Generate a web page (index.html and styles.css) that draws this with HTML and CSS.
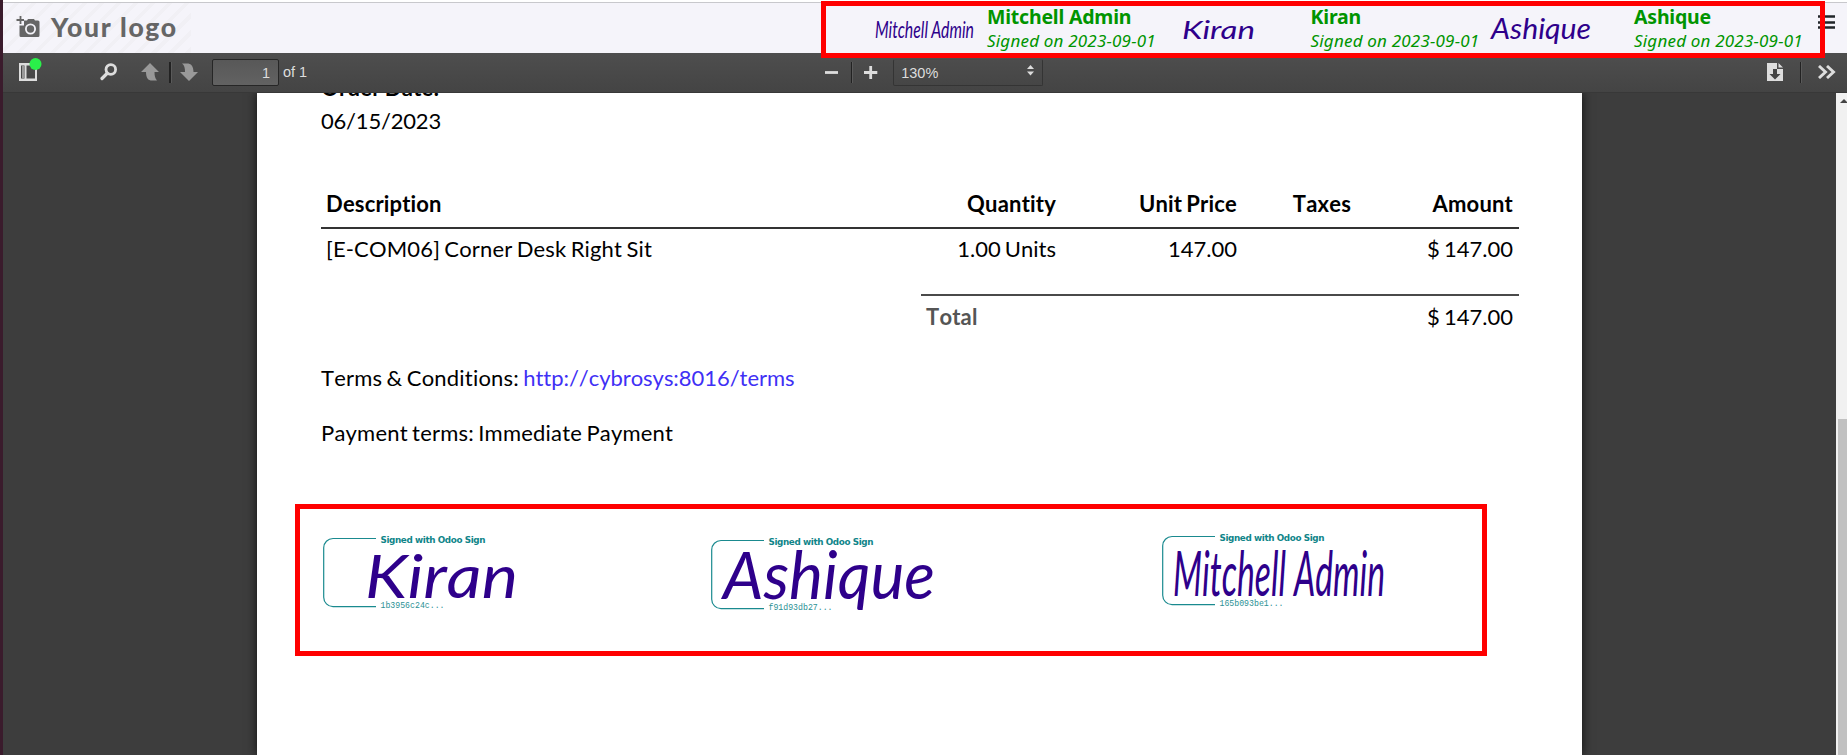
FILE: index.html
```html
<!DOCTYPE html>
<html lang="en">
<head>
<meta charset="utf-8">
<title>Sign document</title>
<link rel="stylesheet" href="styles.css">
</head>
<body>
<div class="app">
  <header class="header">
    <div class="logo">
      <svg width="25" height="23" viewBox="0 0 25 23"><path fill="#666" fill-rule="evenodd" d="M8 4.500h3l1-1.500h6l1 1.500h3a1.500 1.500 0 0 1 1.500 1.500v13.500a1.500 1.500 0 0 1-1.500 1.500h-17a1.500 1.500 0 0 1-1.500-1.500v-10h4.500zM14.500 7.500a5.500 5.500 0 1 0 0 11 5.500 5.500 0 0 0 0-11z"/><circle cx="14.500" cy="13" r="3.700" fill="#666"/><path d="M4.500 0v8M.5 4h7.500" stroke="#666" stroke-width="1.800"/></svg>
      <span>Your logo</span>
    </div>
    <div class="signers">
      <div class="signer">
        <svg class="mini" width="113" height="50"><text class="ink" x="1" y="38" font-size="24" textLength="99" lengthAdjust="spacingAndGlyphs">Mitchell Admin</text></svg>
        <div><div class="name">Mitchell Admin</div><div class="date">Signed on 2023-09-01</div></div>
      </div>
      <div class="signer">
        <svg class="mini" width="113" height="50"><text class="ink" x="-16" y="39" font-size="26" textLength="73" lengthAdjust="spacingAndGlyphs">Kiran</text></svg>
        <div><div class="name">Kiran</div><div class="date">Signed on 2023-09-01</div></div>
      </div>
      <div class="signer">
        <svg class="mini" width="113" height="50"><text class="ink" x="-30" y="39" font-size="28" textLength="100" lengthAdjust="spacingAndGlyphs">Ashique</text></svg>
        <div><div class="name">Ashique</div><div class="date">Signed on 2023-09-01</div></div>
      </div>
    </div>
    <svg class="menu" width="18" height="15"><path d="M0 1.500h17M0 7.500h17M0 12.500h17" stroke="#212529" stroke-width="2.600"/></svg>
  </header>
  <div class="mark mark-top"></div>

  <div class="toolbar">
    <div class="group">
      <svg class="i-side" width="25" height="24"><path fill="#ddd" fill-rule="evenodd" d="M1 5h18v18H1zM3 7.500v13h3.500v-13zM8.500 7.500v13H17v-13z"/><path fill="#999" d="M4 8h2.500v12H4z"/><circle cx="17.500" cy="6" r="6" fill="#2af04a"/></svg>
      <svg class="i-find" width="18" height="18"><circle cx="10.800" cy="6.500" r="4.800" fill="none" stroke="#ddd" stroke-width="2.800"/><path d="M7 10.500L2 15.500" stroke="#ddd" stroke-width="3.200" stroke-linecap="round"/></svg>
      <svg class="i-up" width="18" height="18"><path fill="#999" d="M9 0l9 9h-4.500c0 4 .5 6 2.500 8.500H11C7 17.500 5 15 5 9H0z"/></svg>
      <i class="sep dark"></i>
      <svg class="i-down" width="18" height="18"><path fill="#999" d="M9 18l9-9h-4.500C13.500 3 11 .5 7 .5H2C4.500 2.500 5 5 5 9H0z"/></svg>
      <div class="page-no">1</div>
      <span class="of">of 1</span>
    </div>
    <div class="group zoom">
      <svg width="14" height="14"><path d="M0 7.500h13" stroke="#ddd" stroke-width="2.800"/></svg>
      <i class="sep"></i>
      <svg width="14" height="14"><path d="M0 7.500h13.300M6.700 1v13" stroke="#ddd" stroke-width="2.800"/></svg>
      <div class="select"><span>130%</span><svg width="7" height="11"><path fill="#ddd" d="M3.500 0L7 4H0zM3.500 10.500L0 6.500h7z"/></svg></div>
    </div>
    <div class="group tools">
      <svg width="16" height="18"><path fill="#ddd" d="M0 0h10v6h6v12H0zM11.500 0L16 4.500h-4.500z"/><path fill="#444" d="M6 6h4v5h3.500L8 16.500 2.500 11H6z"/></svg>
      <i class="sep"></i>
      <svg width="18" height="14"><path d="M1 1l6.500 6L1 13M9 1l6.500 6L9 13" fill="none" stroke="#ddd" stroke-width="2.900"/></svg>
    </div>
  </div>

  <main class="viewer">
    <article class="sheet">
      <div class="order"><b>Order Date:</b><span class="order-date">06/15/2023</span></div>
      <div class="row head"><span>Description</span><span>Quantity</span><span>Unit Price</span><span>Taxes</span><span>Amount</span></div>
      <div class="row item"><span>[E-COM06] Corner Desk Right Sit</span><span>1.00 Units</span><span>147.00</span><span></span><span>$ 147.00</span></div>
      <div class="total"><b>Total</b><span>$ 147.00</span></div>
      <p class="terms">Terms &amp; Conditions: <a>http://cybrosys:8016/terms</a></p>
      <p class="terms">Payment terms: Immediate Payment</p>
      <div class="signatures">
        <svg class="sig s1" width="250" height="100"><path class="frame" d="M53 8.500H10a9.300 9.300 0 0 0-9.300 9.300v49.500a9.300 9.300 0 0 0 9.300 9.300h43"/><text class="by" x="57.500" y="12.700" textLength="105">Signed with Odoo Sign</text><text class="hash" x="57.500" y="77.700" textLength="64">1b3956c24c...</text><text class="ink" x="42" y="68" font-size="61" textLength="153" lengthAdjust="spacingAndGlyphs">Kiran</text></svg>
        <svg class="sig s2" width="250" height="100"><path class="frame" d="M53 8.500H10a9.300 9.300 0 0 0-9.300 9.300v49.500a9.300 9.300 0 0 0 9.300 9.300h43"/><text class="by" x="57.500" y="12.700" textLength="105">Signed with Odoo Sign</text><text class="hash" x="57.500" y="77.700" textLength="64">f91d93db27...</text><text class="ink" x="12" y="67" font-size="66" textLength="212" lengthAdjust="spacingAndGlyphs">Ashique</text></svg>
        <svg class="sig s3" width="250" height="100"><path class="frame" d="M53 8.500H10a9.300 9.300 0 0 0-9.300 9.300v49.500a9.300 9.300 0 0 0 9.300 9.300h43"/><text class="by" x="57.500" y="12.700" textLength="105">Signed with Odoo Sign</text><text class="hash" x="57.500" y="77.700" textLength="64">165b093be1...</text><text class="ink" x="11" y="68" font-size="62" textLength="212" lengthAdjust="spacingAndGlyphs">Mitchell Admin</text></svg>
      </div>
      <div class="mark mark-doc"></div>
    </article>
    <div class="scroll"><svg width="11" height="16"><path fill="#444" d="M4 10h8L8 6z"/></svg><div class="thumb"></div></div>
  </main>
</div>
</body>
</html>
```
FILE: styles.css
```css
* { box-sizing: border-box; }
body { margin: 0; overflow: hidden; }
svg { display: block; flex: none; }
.app {
  position: relative;
  display: flex;
  flex-direction: column;
  width: 1847px;
  height: 755px;
  padding-top: 2px;
  border-left: 3px solid #3a1b2c;
  background: #fff;
  overflow: hidden;
}
.header {
  display: flex;
  flex: none;
  height: 51px;
  border-top: 1px solid #c8c8cc;
  background: #f5f4fa;
}
.logo {
  display: flex;
  flex: none;
  width: 188px;
  padding: 13px 0 0 13px;
  background: repeating-linear-gradient(135deg, #f5f4fa 0 8px, #f1f0f5 8px 12px);
}
.logo span {
  margin-left: 10px;
  color: #666;
  font: 900 26.500px/30px Lato, sans-serif;
  letter-spacing: 1.700px;
  white-space: nowrap;
  margin-top: -4px;
}
.signers { display: flex; flex: none; margin-left: 683px; }
.signer { display: flex; width: 323.500px; flex: none; }
.mini { overflow: visible; margin-top: -3px; }
.name {
  height: 25px;
  color: #009400;
  font: 700 19.500px/27px "Noto Sans", sans-serif;
  letter-spacing: -.2px;
  white-space: nowrap;
}
.date {
  color: #009400;
  font: italic 17px/26px "Noto Sans", sans-serif;
  letter-spacing: .2px;
  white-space: nowrap;
}
.menu { margin: 12px 0 0 -27px; }
.ink { fill: #2e008b; font-family: Lato, sans-serif; font-style: italic; }
.mark { position: absolute; border: 5px solid #f00; }
.mark-top { left: 818px; top: 1px; width: 1004px; height: 57px; z-index: 2; }
.toolbar {
  display: flex;
  flex: none;
  height: 40px;
  padding-bottom: 1px;
  background: linear-gradient(#4e4e4e, #444);
  border-bottom: 1px solid #383838;
  color: #ddd;
  font: 14.500px/20px "Liberation Sans", Arial, sans-serif;
}
.group { display: flex; align-items: center; }
.i-side { margin: -4px 0 0 15px; }
.i-find { margin-left: 57px; }
.i-up { margin: 0 0 0 23px; }
.i-down { margin-left: 9px; }
.sep { flex: none; width: 1px; height: 21px; background: #222; box-shadow: 1px 0 #5a5a5a; }
.sep.dark { width: 2px; margin-left: 10px; }
.page-no {
  width: 67px;
  height: 27px;
  margin-left: 14px;
  padding: 3px 8px;
  border: 1px solid #262626;
  border-radius: 2px;
  background: linear-gradient(#585858, #626262);
  text-align: right;
}
.of { margin-left: 4px; }
.zoom { margin-left: 518px; }
.zoom .sep { margin: 0 12px; }
.select {
  display: flex;
  justify-content: space-between;
  width: 150px;
  height: 27px;
  margin-left: 15px;
  padding: 3px 8px 3px 7px;
  border: 1px solid #343434;
  border-top-color: #484848;
  border-radius: 2px;
}
.select svg { margin-top: 2px; }
.tools { margin-left: 724px; }
.tools .sep { margin: 0 17px; }
.viewer { display: flex; flex: 1; min-height: 0; background: #3d3d3d; overflow: hidden; }
.sheet {
  position: relative;
  width: 1325px;
  margin-left: 254px;
  padding: 0 63px 0 64px;
  background: #fff;
  box-shadow: 0 0 10px #111;
  color: #000;
  font: 22px/33px Lato, sans-serif;
  font-kerning: none;
  font-variant-ligatures: none;
  word-spacing: -1.500px;
}
.order { display: flex; flex-direction: column; height: 94px; overflow: hidden; }
.order b { margin-top: -22px; letter-spacing: .25px; }
.order-date { letter-spacing: -.2px; }
.row {
  display: grid;
  grid-template-columns: 580px 161px 181px 114px 162px;
  white-space: nowrap;
}
.row span { padding: 0 6px; text-align: right; }
.row span:first-child { padding-left: 5px; text-align: left; letter-spacing: .16px; }
.head { height: 42px; border-bottom: 2px solid #333; font-weight: 700; letter-spacing: .2px; }
.item { height: 65px; padding-top: 3px; }
.total {
  display: flex;
  justify-content: space-between;
  height: 67px;
  margin-left: 600px;
  padding: 4px 6px 0 5px;
  border-top: 2px solid #4a4a4a;
}
.total b { color: #555; letter-spacing: .2px; }
.terms { height: 55px; margin: 0; white-space: nowrap; letter-spacing: .2px; }
.terms a { color: #3f30f5; letter-spacing: -.05px; }
.signatures { display: flex; padding-top: 59px; word-spacing: 0; }
.sig { overflow: visible; margin-left: 2px; }
.s2 { margin: 2px 0 0 138px; }
.s3 { margin: -2px 0 0 201px; }
.frame { fill: none; stroke: #1a8a8f; stroke-width: 1.200; }
.by { fill: #0f8589; font: 700 8.800px "DejaVu Sans", sans-serif; }
.hash { fill: #2b9195; font: 8.200px "Liberation Mono", monospace; }
.mark-doc { left: 37.500px; top: 411px; width: 1192px; height: 152px; }
.scroll { width: 11px; margin-left: auto; background: #f1f1f1; overflow: hidden; }
.thumb { height: 340px; margin: 310px 0 0 2px; background: #c1c1c1; }
```
